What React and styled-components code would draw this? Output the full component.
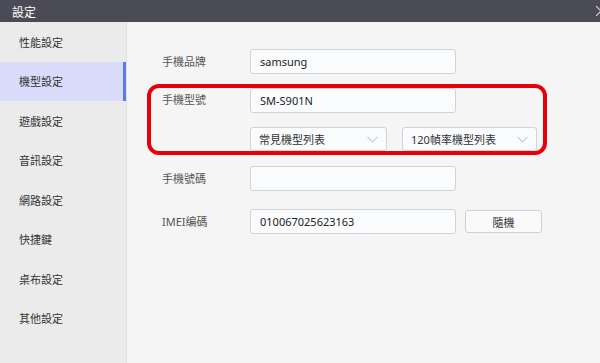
import React from "react"
import styled, { createGlobalStyle } from "styled-components"

const GlobalStyle = createGlobalStyle`
  html, body {
    margin: 0;
    padding: 0;
    width: 600px;
    height: 363px;
    overflow: hidden;
    font-family: "Noto Sans", "Noto Sans CJK TC", sans-serif;
  }
`

const Window = styled.div`
  width: 600px;
  height: 363px;
  display: flex;
  flex-direction: column;
  background: #f5f5f5;
`

const TitleBar = styled.div`
  height: 22px;
  background: #4a4b57;
  display: flex;
  align-items: center;
  justify-content: space-between;
  padding-left: 12px;
  color: #ffffff;
  font-size: 12px;
  font-family: "Noto Sans CJK TC", sans-serif;
  overflow: hidden;
`

const CloseMark = styled.svg`
  width: 8px;
  height: 10px;
  margin-right: -4px;
`

const Body = styled.div`
  flex: 1;
  display: flex;
`

const Sidebar = styled.nav`
  width: 126px;
  background: #ebebeb;
  border-right: 1px solid #e2e2e2;
  display: flex;
  flex-direction: column;
`

const NavItem = styled.div`
  height: 39.5px;
  display: flex;
  align-items: center;
  padding-left: 19px;
  font-size: 11px;
  color: #333;
  font-family: "Noto Sans CJK TC", sans-serif;
  background: ${(p) => (p.$active ? "#d8dcfa" : "transparent")};
  box-shadow: ${(p) => (p.$active ? "inset -3px 0 0 #5a78ef" : "none")};
`

const Main = styled.main`
  flex: 1;
  position: relative;
  padding: 27px 0 0 35px;
  display: flex;
  flex-direction: column;
`

const Row = styled.div`
  display: flex;
  align-items: ${(p) => (p.$top ? "flex-start" : "center")};
  margin-bottom: ${(p) => p.$gap || 14}px;
`

const Label = styled.div`
  width: 88px;
  font-size: 11px;
  color: #555;
  line-height: 23px;
  font-family: "Noto Sans", "Noto Sans CJK TC", sans-serif;
`

const Stack = styled.div`
  display: flex;
  flex-direction: column;
  gap: 14px;
`

const Input = styled.div`
  box-sizing: border-box;
  width: ${(p) => p.$w || 206}px;
  height: 25px;
  background: #fafbfd;
  border: 1px solid #d2d3d7;
  border-radius: 3px;
  display: flex;
  align-items: center;
  padding-left: 9px;
  font-size: 11px;
  color: #222;
`

const Pair = styled.div`
  display: flex;
  gap: 15px;
`

const Select = styled.div`
  box-sizing: border-box;
  width: ${(p) => p.$w}px;
  height: 24px;
  background: #fafbfd;
  border: 1px solid #d2d3d7;
  border-radius: 3px;
  display: flex;
  align-items: center;
  justify-content: space-between;
  padding: 0 8px 0 8px;
  font-size: 11px;
  color: #333;
  font-family: "Noto Sans", "Noto Sans CJK TC", sans-serif;
`

const Chevron = styled.svg`
  width: 11px;
  height: 7px;
`

const Button = styled.button`
  box-sizing: border-box;
  width: 77px;
  height: 23px;
  margin-left: 9px;
  background: #fafafa;
  border: 1px solid #cfd0d4;
  border-radius: 3px;
  font-size: 11px;
  color: #333;
  font-family: "Noto Sans CJK TC", sans-serif;
  padding: 0;
`

const Highlight = styled.div`
  position: absolute;
  left: 20px;
  top: 62px;
  width: 400px;
  height: 71px;
  box-sizing: border-box;
  border: 4px solid #e6000a;
  border-radius: 12px;
  pointer-events: none;
`

const navItems = ["性能設定", "機型設定", "遊戲設定", "音訊設定", "網路設定", "快捷鍵", "桌布設定", "其他設定"]

const Arrow = () => (
  <Chevron viewBox="0 0 11 7">
    <path d="M0.5 0.8 L5.5 6 L10.5 0.8" fill="none" stroke="#b3b3b8" strokeWidth="1" />
  </Chevron>
)

const App = () => {
  return (
    <Window>
      <GlobalStyle />
      <TitleBar>
        <span>設定</span>
        <CloseMark viewBox="0 0 8 10">
          <path d="M0 0 L5 5 L0 10" fill="none" stroke="#d8d8dc" strokeWidth="1.2" />
        </CloseMark>
      </TitleBar>
      <Body>
        <Sidebar>
          {navItems.map((n, i) => (
            <NavItem key={n} $active={i === 1}>{n}</NavItem>
          ))}
        </Sidebar>
        <Main>
          <Row>
            <Label>手機品牌</Label>
            <Input>samsung</Input>
          </Row>
          <Row $top $gap={15}>
            <Label>手機型號</Label>
            <Stack>
              <Input>SM-S901N</Input>
              <Pair>
                <Select $w={137}>常見機型列表<Arrow /></Select>
                <Select $w={135}>120幀率機型列表<Arrow /></Select>
              </Pair>
            </Stack>
          </Row>
          <Row $gap={18}>
            <Label>手機號碼</Label>
            <Input />
          </Row>
          <Row>
            <Label>IMEI编碼</Label>
            <Input>010067025623163</Input>
            <Button>隨機</Button>
          </Row>
          <Highlight />
        </Main>
      </Body>
    </Window>
  )
}

export default App
